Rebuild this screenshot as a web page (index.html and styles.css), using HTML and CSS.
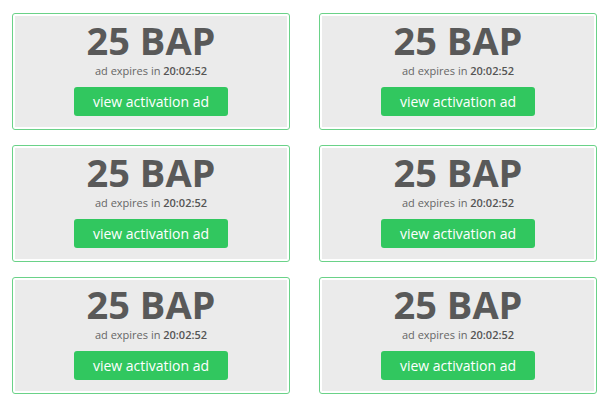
FILE: index.html
```html
<!DOCTYPE html>
<html>
<head>
<meta charset="utf-8">
<link rel="stylesheet" href="styles.css">
</head>
<body>
<div class="grid">
  <div class="card"><div class="inner"><div class="amount">25 BAP</div><div class="expires">ad expires in <b>20:02:52</b></div><a class="btn">view activation ad</a></div></div>
  <div class="card"><div class="inner"><div class="amount">25 BAP</div><div class="expires">ad expires in <b>20:02:52</b></div><a class="btn">view activation ad</a></div></div>
  <div class="card"><div class="inner"><div class="amount">25 BAP</div><div class="expires">ad expires in <b>20:02:52</b></div><a class="btn">view activation ad</a></div></div>
  <div class="card"><div class="inner"><div class="amount">25 BAP</div><div class="expires">ad expires in <b>20:02:52</b></div><a class="btn">view activation ad</a></div></div>
  <div class="card"><div class="inner"><div class="amount">25 BAP</div><div class="expires">ad expires in <b>20:02:52</b></div><a class="btn">view activation ad</a></div></div>
  <div class="card"><div class="inner"><div class="amount">25 BAP</div><div class="expires">ad expires in <b>20:02:52</b></div><a class="btn">view activation ad</a></div></div>
</div>
</body>
</html>
```
FILE: styles.css
```css
html, body {
  margin: 0;
  padding: 0;
  background: #ffffff;
}
body {
  font-family: "Open Sans", "DejaVu Sans", sans-serif;
}
.grid {
  display: grid;
  grid-template-columns: 278px 278px;
  column-gap: 29px;
  row-gap: 15px;
  padding: 13px 0 0 12px;
}
.card {
  border: 1px solid #6ad288;
  border-radius: 3px;
  padding: 2px;
  background: #fff;
}
.inner {
  background: #ebebeb;
  display: flex;
  flex-direction: column;
  align-items: center;
  padding: 3px 0 11px;
  height: 111px;
  box-sizing: border-box;
}
.amount {
  font-size: 38px;
  font-weight: 700;
  line-height: 42px;
  color: #595959;
}
.expires {
  font-size: 11px;
  line-height: 15px;
  color: #666;
  margin-top: 2px;
}
.expires b {
  font-weight: 600;
  color: #555;
}
.btn {
  margin-top: 9px;
  width: 154px;
  height: 29px;
  line-height: 29px;
  background: #31c75f;
  color: #fff;
  border-radius: 3px;
  font-size: 14px;
  text-align: center;
}
```
